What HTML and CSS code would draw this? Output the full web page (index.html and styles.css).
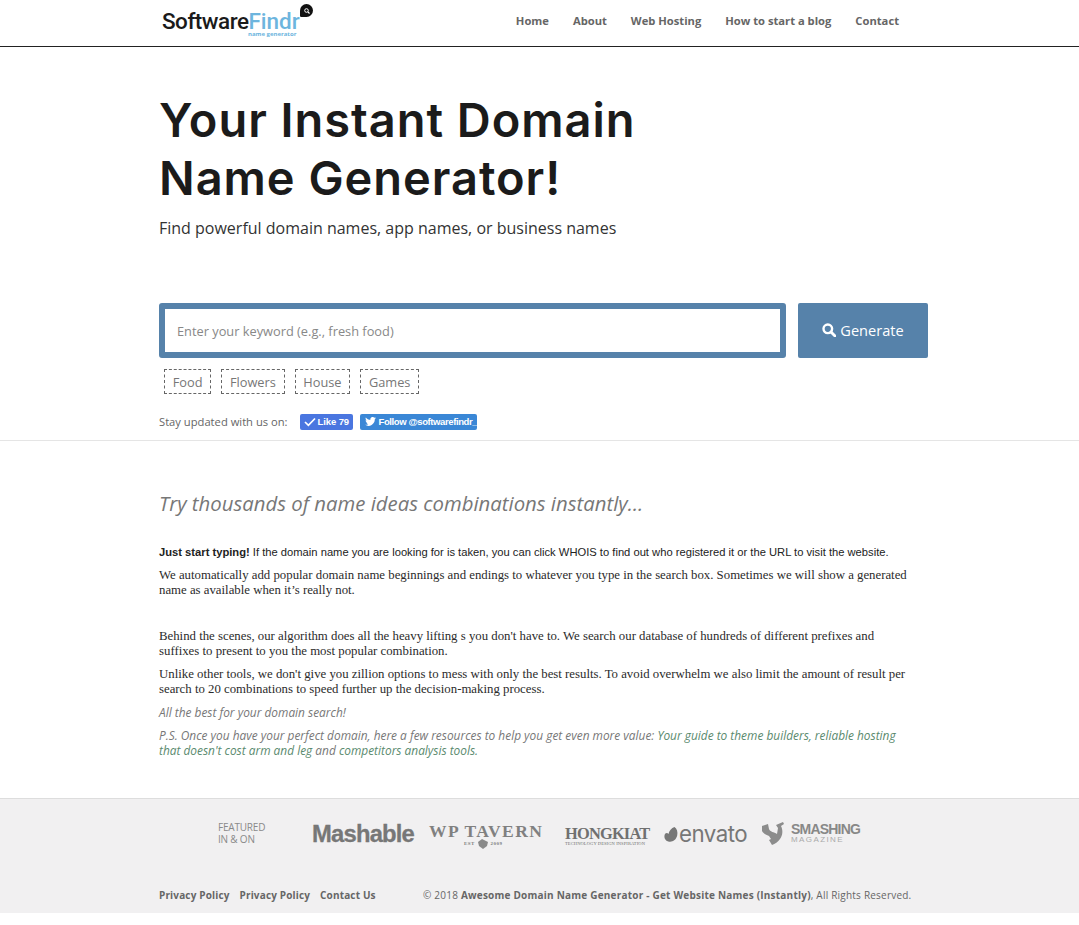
FILE: index.html
```html
<!DOCTYPE html>
<html lang="en">
<head>
<meta charset="utf-8">
<title>Awesome Domain Name Generator</title>
<link rel="stylesheet" href="styles.css">
</head>
<body>
<header class="topbar">
  <div class="wrap topbar-in">
    <a class="logo" href="#">
      <span class="logo-main"><span class="logo-dark">Software</span><span class="logo-blue">Findr</span></span>
      <span class="logo-sub">name generator</span>
      <span class="logo-bubble"><svg width="6" height="6" viewBox="0 0 12 12"><circle cx="5" cy="5" r="3.6" fill="none" stroke="#fff" stroke-width="2"/><path d="M8 8l3 3" stroke="#fff" stroke-width="2.2"/></svg></span>
    </a>
    <nav class="nav">
      <a href="#">Home</a><a href="#">About</a><a href="#">Web Hosting</a><a href="#">How to start a blog</a><a href="#">Contact</a>
    </nav>
  </div>
</header>

<section class="hero">
  <div class="wrap">
    <h1>Your Instant Domain<br>Name Generator!</h1>
    <p class="lead">Find powerful domain names, app names, or business names</p>
    <form class="search">
      <input class="search-input" type="text" placeholder="Enter your keyword (e.g., fresh food)">
      <button class="search-btn" type="button">
        <svg width="14" height="14" viewBox="0 0 14 14"><circle cx="5.8" cy="5.8" r="4.3" fill="none" stroke="#fff" stroke-width="2.4"/><path d="M9 9l4 4" stroke="#fff" stroke-width="2.8" stroke-linecap="round"/></svg>
        Generate
      </button>
    </form>
    <div class="tags">
      <a href="#">Food</a><a href="#">Flowers</a><a href="#">House</a><a href="#">Games</a>
    </div>
    <div class="social">
      <span class="social-label">Stay updated with us on:</span>
      <a class="btn-like" href="#"><svg width="12" height="10" viewBox="0 0 12 10"><path d="M1 5l3.4 3.4L11 1.5" fill="none" stroke="#fff" stroke-width="1.7"/></svg>Like 79</a>
      <a class="btn-follow" href="#"><svg width="11" height="9" viewBox="0 0 24 20"><path fill="#fff" d="M24 2.4c-.9.4-1.8.7-2.8.8 1-.6 1.8-1.6 2.2-2.7-1 .6-2 1-3.1 1.2A4.9 4.9 0 0 0 11.900 6.200C7.800 6 4.200 4 1.700 1c-1.300 2.200-.7 5.100 1.500 6.600-.8 0-1.600-.2-2.200-.6 0 2.400 1.700 4.400 3.900 4.900-.7.200-1.500.2-2.200.1.600 1.900 2.400 3.300 4.600 3.400A9.900 9.900 0 0 1 0 17.400 14 14 0 0 0 21.500 5c1-.7 1.800-1.600 2.500-2.600z"/></svg>Follow @softwarefindr_</a>
    </div>
  </div>
</section>

<main class="content">
  <div class="wrap">
    <h2>Try thousands of name ideas combinations instantly…</h2>
    <p class="sans"><strong>Just start typing!</strong> If the domain name you are looking for is taken, you can click WHOIS to find out who registered it or the URL to visit the website.</p>
    <p class="serif">We automatically add popular domain name beginnings and endings to whatever you type in the search box. Sometimes we will show a generated name as available when it’s really not.</p>
    <p class="serif gap-top">Behind the scenes, our algorithm does all the heavy lifting s you don't have to. We search our database of hundreds of different prefixes and suffixes to present to you the most popular combination.</p>
    <p class="serif">Unlike other tools, we don't give you zillion options to mess with only the best results. To avoid overwhelm we also limit the amount of result per search to 20 combinations to speed further up the decision-making process.</p>
    <p class="note">All the best for your domain search!</p>
    <p class="note">P.S. Once you have your perfect domain, here a few resources to help you get even more value: <a href="#">Your guide to theme builders, reliable hosting that doesn't cost arm and leg</a> and <a href="#">competitors analysis tools.</a></p>
  </div>
</main>

<footer class="footer">
  <div class="wrap">
    <div class="press">
      <div class="featured">FEATURED<br>IN &amp; ON</div>
      <div class="mashable">Mashable</div>
      <div class="tavern">WP TAVERN<small>EST <svg width="12" height="10" viewBox="0 0 12 10"><path fill="#8a8a8a" d="M1 3l4-3 6 3-1 4-4 3-4-3z"/></svg> 2009</small></div>
      <div class="hongkiat">HONGKIAT<small>TECHNOLOGY DESIGN INSPIRATION</small></div>
      <div class="envato"><svg width="14" height="15" viewBox="0 0 14 15"><path fill="#777" d="M10.500 0c2.500 1.500 3.500 5 2.700 8.500C12.300 12.500 9 15 5.500 14.700 1.800 14.400 0 11.500.5 8.500 1 5.500 3.500 5.500 4.500 7c.5-3 3-6 6-7z"/></svg>envato</div>
      <div class="smashing">
        <svg width="26" height="26" viewBox="0 0 26 26"><path fill="#8c8c8c" d="M1 5l6-2 1 5c1 3 5 3 8 5l1-6-2-3 7-3 1 2-3 2c2 4 2 9-1 13-2 3-5 5-8 6l-3-5 2-1-2-3c-3-1-6-3-7-5z"/></svg>
        <div class="smash-text">SMASHING<small>MAGAZINE</small></div>
      </div>
    </div>
    <div class="legal">
      <nav class="legal-links"><a href="#">Privacy Policy</a><a href="#">Privacy Policy</a><a href="#">Contact Us</a></nav>
      <p class="copy">© 2018 <strong>Awesome Domain Name Generator - Get Website Names (Instantly)</strong>, All Rights Reserved.</p>
    </div>
  </div>
</footer>
</body>
</html>
```
FILE: styles.css
```css
* { box-sizing: border-box; }
html, body { margin: 0; padding: 0; }
body { background: #fff; color: #333; font-family: "Open Sans", sans-serif; }
a { color: inherit; text-decoration: none; }
.wrap { width: 761px; margin-left: 159px; }

.topbar { height: 47px; border-bottom: 1px solid #222; }
.topbar-in { display: flex; justify-content: space-between; height: 46px; width: 740px; }
.logo { position: relative; display: block; margin: 9px 0 0 3px; height: 30px; width: 150px; }
.logo-main { display: block; font: 500 22.500px/25px Roboto, sans-serif; letter-spacing: -0.5px; }
.logo-dark { color: #1a1a1a; }
.logo-blue { color: #6db5de; letter-spacing: 0; }
.logo-sub { position: absolute; left: 86px; top: 22px; font: 700 6px/7px "Open Sans", sans-serif; color: #6db5de; white-space: nowrap; }
.logo-bubble { position: absolute; left: 138px; top: -5px; width: 13px; height: 13px; border-radius: 50% 50% 50% 10%; background: #111; display: flex; align-items: center; justify-content: center; }
.nav { display: flex; gap: 24px; align-items: center; height: 40px; }
.nav a { font-size: 11.200px; font-weight: 700; color: #666; }

.hero { height: 394px; border-bottom: 1px solid #e5e5e5; }
h1 { margin: 0; padding-top: 44px; font: 600 47px/58px Inter, sans-serif; color: #1b1b1b; letter-spacing: 0.96px; }
.lead { margin: 9px 0 0; font-size: 16px; line-height: 24px; color: #333; }
.search { display: flex; gap: 12px; margin-top: 63px; width: 769px; }
.search-input { flex: 1; min-width: 0; height: 55px; border: 6px solid #5682aa; border-radius: 3px; padding: 0 12px; font: 12.800px "Open Sans", sans-serif; outline: none; }
.search-input::placeholder { color: #888; opacity: 1; }
.search-btn { width: 130px; height: 55px; border: 0; border-radius: 2px; padding: 0 0 2px; background: #5682aa; color: #fff; font: 14.600px "Open Sans", sans-serif; display: flex; align-items: center; justify-content: center; gap: 4px; }
.tags { display: flex; gap: 10px; margin: 11px 0 0 5px; }
.tags a { height: 25px; padding: 0 7.700px; border: 1px dashed #666; font-size: 12.800px; line-height: 24px; color: #777; }
.social { display: flex; align-items: center; margin-top: 19px; height: 17px; }
.social-label { font-size: 11.200px; color: #666; margin-right: 12px; }
.btn-like, .btn-follow { display: flex; align-items: center; height: 16px; border-radius: 2px; color: #fff; font: 700 9.500px/16px "Liberation Sans", sans-serif; letter-spacing: -0.4px; white-space: nowrap; }
.btn-like svg, .btn-follow svg { flex: none; }
.btn-like { width: 53px; background: #4a76e0; padding-left: 4px; gap: 2px; letter-spacing: -0.1px; }
.btn-follow { width: 117px; margin-left: 7px; background: #3a87d6; padding-left: 5px; gap: 3px; }

.content { height: 358px; padding-top: 48px; border-bottom: 1px solid #ddd; }
h2 { margin: 0 0 28px; font: italic 400 20.350px/28px "Open Sans", sans-serif; color: #777; }
.content p { margin: 0 0 8px; width: 750px; }
.sans { font: 11.200px/15px "Liberation Sans", sans-serif; color: #222; }
.serif { font: 12.800px/15px "Liberation Serif", serif; color: #2b2b2b; }
.content .gap-top { margin-top: 31px; }
.note { font: italic 11.900px/15px "Open Sans", sans-serif; color: #777; }
.note a { color: #5a8a6e; }

.footer { height: 114px; background: #f1f0f1; }
.press { display: flex; align-items: center; height: 70px; padding-left: 59px; color: #777; white-space: nowrap; }
.featured { width: 94px; margin-top: -2px; font-size: 10px; line-height: 12px; color: #8a8a8a; letter-spacing: -0.2px; }
.mashable { width: 117px; font: 700 23.800px/26px "Liberation Sans", sans-serif; letter-spacing: -0.8px; color: #777; -webkit-text-stroke: .3px #777; }
.tavern { width: 136px; text-align: left; font: 700 17.500px/15px "Liberation Serif", serif; letter-spacing: 1.4px; color: #808080; margin-top: 5px; }
.tavern small, .hongkiat small { display: block; font-size: 5px; line-height: 9px; letter-spacing: .5px; }
.tavern small { padding-left: 35px; }
.tavern svg { vertical-align: middle; }
.hongkiat { width: 99px; font: 700 16.400px/15px "Liberation Serif", serif; letter-spacing: -.8px; color: #707070; margin-top: 4px; }
.hongkiat small { font-size: 4.500px; font-weight: 400; letter-spacing: .1px; line-height: 5px; }
.envato { display: flex; align-items: center; gap: 1px; width: 97px; font: 400 22.300px/22px Inter, sans-serif; letter-spacing: -.5px; color: #777; }
.smashing { display: flex; align-items: center; gap: 4px; color: #888; }
.smash-text { margin-top: -1px; font: 700 14px/12px "Liberation Sans", sans-serif; letter-spacing: -.8px; }
.smash-text small { display: block; font-size: 8px; line-height: 10px; font-weight: 400; letter-spacing: 1.4px; color: #aaa; }
.legal { display: flex; align-items: center; margin-top: 18px; height: 16px; font-size: 10px; color: #666; white-space: nowrap; letter-spacing: .215px; }
.legal-links { display: flex; gap: 10px; width: 264px; font-weight: 700; color: #666; letter-spacing: .15px; }
.copy { margin: 0; }
```
